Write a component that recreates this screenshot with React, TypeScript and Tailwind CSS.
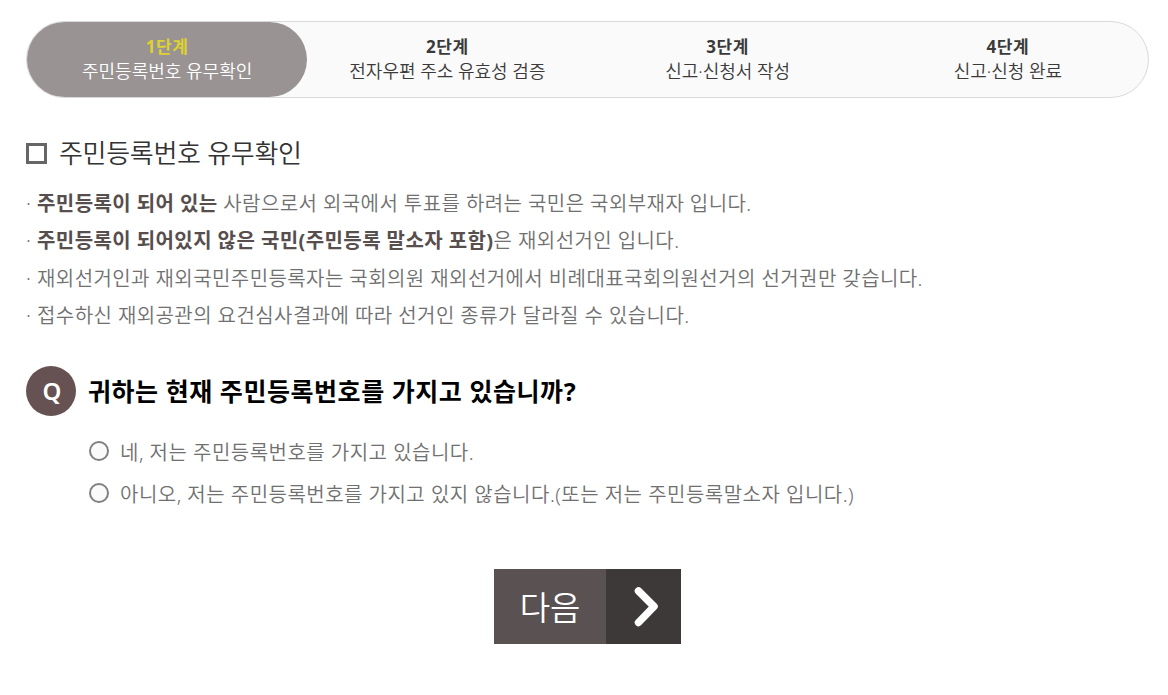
import { useState } from 'react';

const steps = [
  { step: '1단계', label: '주민등록번호 유무확인' },
  { step: '2단계', label: '전자우편 주소 유효성 검증' },
  { step: '3단계', label: '신고·신청서 작성' },
  { step: '4단계', label: '신고·신청 완료' },
];

const notices = [
  { strong: '주민등록이 되어 있는', text: ' 사람으로서 외국에서 투표를 하려는 국민은 국외부재자 입니다.' },
  { strong: '주민등록이 되어있지 않은 국민(주민등록 말소자 포함)', text: '은 재외선거인 입니다.' },
  { strong: '', text: '재외선거인과 재외국민주민등록자는 국회의원 재외선거에서 비례대표국회의원선거의 선거권만 갖습니다.' },
  { strong: '', text: '접수하신 재외공관의 요건심사결과에 따라 선거인 종류가 달라질 수 있습니다.' },
];

const answers = [
  { value: 'yes', label: '네, 저는 주민등록번호를 가지고 있습니다.' },
  { value: 'no', label: '아니오, 저는 주민등록번호를 가지고 있지 않습니다.(또는 저는 주민등록말소자 입니다.)' },
];

function StepBar({ current }: { current: number }) {
  return (
    <ol className="flex h-[77px] rounded-full border border-[#d9d9d9] bg-[#fafafa]">
      {steps.map((item, i) => (
        <li
          key={item.step}
          className={
            i === current
              ? 'flex-1 rounded-full bg-[#999393] pt-3 text-center text-lg leading-[25px] text-white'
              : 'flex-1 pt-3 text-center text-lg leading-[25px] text-[#3a3a3a]'
          }
        >
          <strong
            className={
              i === current
                ? 'block text-[17px] leading-[25px] font-bold tracking-[0.6px] text-[#ddd22f]'
                : 'block text-[17px] leading-[25px] font-bold tracking-[0.6px]'
            }
          >
            {item.step}
          </strong>
          <span className="block font-[350]">{item.label}</span>
        </li>
      ))}
    </ol>
  );
}

export default function App() {
  const [answer, setAnswer] = useState('');

  return (
    <div className="h-[695px] overflow-hidden bg-white pt-[21px] pr-[19px] pl-[26px] font-['Noto_Sans','Noto_Sans_CJK_KR',sans-serif] whitespace-nowrap">
      <StepBar current={0} />

      <h2 className="mt-[35px] flex h-10 items-center text-[26px] leading-10 font-[350] tracking-[-0.3px] text-[#333]">
        <span className="mr-3 size-[21px] border-[3px] border-[#666]" />
        주민등록번호 유무확인
      </h2>

      <ul className="mt-[12px] text-xl leading-[37.3px] font-[350] tracking-[0.42px] text-[#707070]">
        {notices.map((item) => (
          <li key={item.text} className="flex">
            <span className="w-[11px]">·</span>
            <p className="whitespace-pre">
              {item.strong && <strong className="font-bold text-[#574e4e]">{item.strong}</strong>}
              {item.text}
            </p>
          </li>
        ))}
      </ul>

      <div className="mt-[32px] flex h-[50px] items-center">
        <span className="mr-3 flex size-[50px] items-center justify-center rounded-full bg-[#665252] pl-0.5 text-2xl font-semibold text-white">
          Q
        </span>
        <h3 className="text-[25px] leading-[50px] font-bold tracking-[0.55px] text-black">
          귀하는 현재 주민등록번호를 가지고 있습니까?
        </h3>
      </div>

      <div className="mt-[14px] ml-[63px]">
        {answers.map((item) => (
          <label
            key={item.value}
            className="flex h-[42px] items-center text-xl leading-[42px] font-[350] tracking-[0.48px] text-[#707070]"
          >
            <input
              type="radio"
              name="hasNumber"
              value={item.value}
              checked={answer === item.value}
              onChange={() => setAnswer(item.value)}
              className="mr-[11px] size-5 appearance-none rounded-full border-2 border-[#808080] bg-[#fafafa] checked:border-[6px]"
            />
            <span className="pt-1">{item.label}</span>
          </label>
        ))}
      </div>

      <button type="button" className="mt-[55px] ml-[468px] flex h-[75px] w-[187px] text-white">
        <span className="flex h-full w-28 items-center justify-center bg-[#5a5252] pt-0.5 text-[33px] leading-[73px] font-[350]">
          다음
        </span>
        <span className="flex h-full flex-1 items-center justify-center bg-[#3e3939]">
          <svg
            viewBox="0 0 24 40"
            className="ml-1 h-10 w-6"
            fill="none"
            stroke="currentColor"
            strokeWidth="7.5"
            strokeLinecap="round"
            strokeLinejoin="round"
          >
            <path d="M4.500 4L20 19.500L4.500 35.500" />
          </svg>
        </span>
      </button>
    </div>
  );
}
